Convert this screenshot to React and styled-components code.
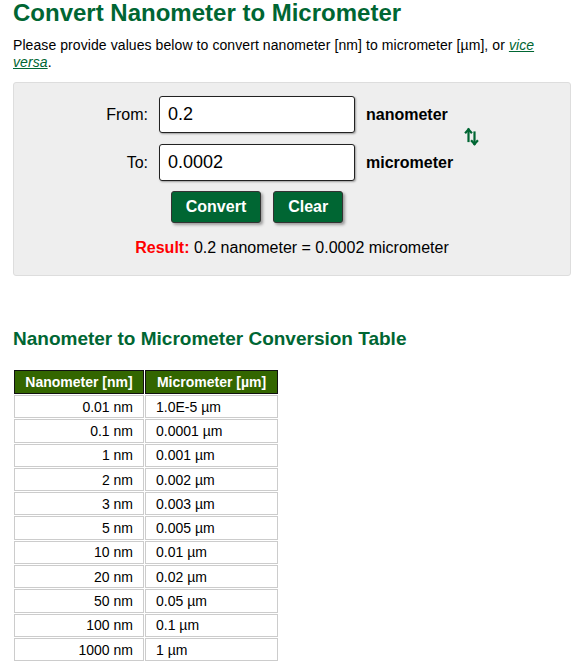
import React, { useState } from 'react';
import styled, { createGlobalStyle } from 'styled-components';

const rows = [
  ['0.01 nm', '1.0E-5 µm'],
  ['0.1 nm', '0.0001 µm'],
  ['1 nm', '0.001 µm'],
  ['2 nm', '0.002 µm'],
  ['3 nm', '0.003 µm'],
  ['5 nm', '0.005 µm'],
  ['10 nm', '0.01 µm'],
  ['20 nm', '0.02 µm'],
  ['50 nm', '0.05 µm'],
  ['100 nm', '0.1 µm'],
  ['1000 nm', '1 µm'],
];

const GlobalStyle = createGlobalStyle`
  body {
    margin: 0;
    background: #fff;
    font-family: "Liberation Sans", Arial, sans-serif;
    color: #000;
  }
`;

const Page = styled.div`
  padding: 0 16px 0 13px;
`;

const Title = styled.h1`
  margin: 0;
  font-size: 24px;
  line-height: 26px;
  font-weight: bold;
  color: #006633;
`;

const Intro = styled.p`
  margin: 11px 0 11px;
  font-size: 14px;
  line-height: 17px;
  letter-spacing: 0.08px;
  color: #000;

  a {
    color: #006633;
    font-style: italic;
  }
`;

const ConverterBox = styled.div`
  background: #eeeeee;
  border: 1px solid #dddddd;
  border-radius: 3px;
  padding: 13px 0 18px 74px;
`;

const FormGrid = styled.div`
  display: grid;
  grid-template-columns: 60px 196px 87px 24px;
  grid-template-rows: 37px 37px;
  column-gap: 11px;
  row-gap: 11px;
  align-items: center;
`;

const Label = styled.label`
  justify-self: end;
  font-size: 16px;
  color: #000;
`;

const ValueInput = styled.input`
  box-sizing: border-box;
  width: 196px;
  height: 37px;
  padding: 0 8px;
  border: 1px solid #222;
  border-radius: 3px;
  box-shadow: 1px 1px 2px rgba(0, 0, 0, 0.35);
  font-family: "Liberation Sans", Arial, sans-serif;
  font-size: 18px;
  color: #000;
  background: #fff;
  outline: none;
`;

const Unit = styled.span`
  font-size: 16px;
  font-weight: bold;
  color: #000;
  white-space: nowrap;
`;

const SwapCell = styled.div`
  grid-column: 4;
  grid-row: 1 / span 2;
  align-self: center;
  padding-top: 1px;
`;

const ButtonRow = styled.div`
  display: flex;
  justify-content: center;
  gap: 12px;
  width: 196px;
  margin: 10px 0 0 71px;
`;

const ActionButton = styled.button`
  height: 32px;
  padding: 0 14px;
  background: #006633;
  border: 1px solid #333;
  border-radius: 3px;
  box-shadow: 2px 2px 3px rgba(0, 0, 0, 0.35);
  color: #fff;
  font-family: "Liberation Sans", Arial, sans-serif;
  font-size: 16px;
  font-weight: bold;
  cursor: pointer;
`;

const ResultLine = styled.div`
  margin: 16px 0 0 -74px;
  text-align: center;
  font-size: 16px;
  line-height: 18px;

  b {
    color: #ff0000;
  }
`;

const TableTitle = styled.h2`
  margin: 52px 0 19px;
  font-size: 19px;
  line-height: 22px;
  font-weight: bold;
  color: #006633;
`;

const Table = styled.table`
  border-collapse: separate;
  border-spacing: 1px;
  font-size: 14px;
`;

const HeadCell = styled.th`
  box-sizing: border-box;
  height: 24px;
  width: ${(p) => p.$w}px;
  background: #336600;
  border: 1px solid #111;
  color: #fff;
  font-weight: bold;
  text-align: center;
  padding: 0 4px;
`;

const Cell = styled.td`
  box-sizing: border-box;
  height: 23.3px;
  border: 1px solid #cccccc;
  padding: 0 10px;
  text-align: ${(p) => p.$align};
  color: #000;
`;

const SwapIcon = () => (
  <svg width="18" height="20" viewBox="0 0 18 20" fill="none" stroke="#006633" strokeWidth="2.2" strokeLinecap="square">
    <path d="M4.5 14V2.5" />
    <path d="M1.8 5.5L4.5 2.5L7.2 5.5" />
    <path d="M10.5 5.5V17" />
    <path d="M7.8 14L10.5 17L13.2 14" />
  </svg>
);

export default function App() {
  const [from, setFrom] = useState('0.2');
  const [to, setTo] = useState('0.0002');

  return (
    <Page>
      <GlobalStyle />
      <Title>Convert Nanometer to Micrometer</Title>
      <Intro>
        Please provide values below to convert nanometer [nm] to micrometer [µm], or <a href="#">vice versa</a>.
      </Intro>

      <ConverterBox>
        <FormGrid>
          <Label>From:</Label>
          <ValueInput value={from} onChange={(e) => setFrom(e.target.value)} />
          <Unit>nanometer</Unit>
          <SwapCell>
            <SwapIcon />
          </SwapCell>
          <Label>To:</Label>
          <ValueInput value={to} onChange={(e) => setTo(e.target.value)} />
          <Unit>micrometer</Unit>
        </FormGrid>
        <ButtonRow>
          <ActionButton>Convert</ActionButton>
          <ActionButton>Clear</ActionButton>
        </ButtonRow>
        <ResultLine>
          <b>Result:</b> 0.2 nanometer = 0.0002 micrometer
        </ResultLine>
      </ConverterBox>

      <TableTitle>Nanometer to Micrometer Conversion Table</TableTitle>
      <Table>
        <thead>
          <tr>
            <HeadCell $w={130}>Nanometer [nm]</HeadCell>
            <HeadCell $w={133}>Micrometer [µm]</HeadCell>
          </tr>
        </thead>
        <tbody>
          {rows.map(([nm, um]) => (
            <tr key={nm}>
              <Cell $align="right">{nm}</Cell>
              <Cell $align="left">{um}</Cell>
            </tr>
          ))}
        </tbody>
      </Table>
    </Page>
  );
}
